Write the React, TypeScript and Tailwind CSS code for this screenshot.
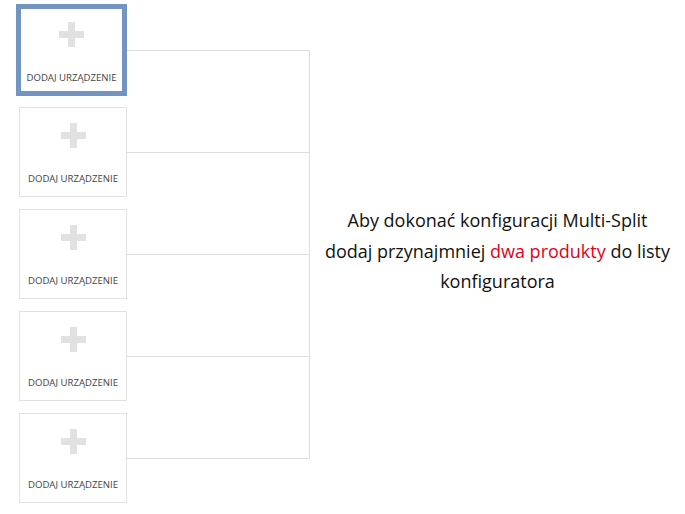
const font = { fontFamily: '"Open Sans", "Liberation Sans", sans-serif' };

function Plus() {
  return (
    <svg width="25" height="25" viewBox="0 0 25 25" className="block">
      <rect x="9" y="0" width="7" height="25" fill="#e1e1e1" />
      <rect x="0" y="9" width="25" height="7" fill="#e1e1e1" />
    </svg>
  );
}

function DeviceCard({ active }: { active?: boolean }) {
  return (
    <button
      type="button"
      className={
        active
          ? "flex h-[92px] w-[111px] flex-col items-center border-[5px] border-[#7194c1] bg-white pt-[13px]"
          : "ml-[3px] flex h-[90px] w-[108px] flex-col items-center border border-[#e2e2e2] bg-white pt-[15px]"
      }
    >
      <Plus />
      <span className="mt-[25px] text-[9.6px] leading-[12px] text-[#444]">DODAJ URZĄDZENIE</span>
    </button>
  );
}

export default function App() {
  return (
    <div className="flex h-[514px] w-[685px] bg-white" style={font}>
      <div className="flex w-[127px] shrink-0 flex-col pl-[16px] pt-[4px]">
        <DeviceCard active />
        <div className="mt-[11px] flex flex-col gap-[12px]">
          <DeviceCard />
          <DeviceCard />
          <DeviceCard />
          <DeviceCard />
        </div>
      </div>

      <div className="mt-[50px] flex h-[409px] w-[183px] shrink-0 flex-col border-r border-[#dedede]">
        <div className="h-[102px] border-t border-[#dedede]" />
        <div className="h-[102px] border-t border-[#dedede]" />
        <div className="h-[102px] border-t border-[#dedede]" />
        <div className="h-[103px] border-y border-[#dedede]" />
      </div>

      <div className="flex flex-1 justify-center pt-[205px]">
        <p className="text-center text-[18px] leading-[30.5px] text-[#111]">
          Aby dokonać konfiguracji Multi-Split
          <br />
          dodaj przynajmniej <span className="text-[#e3001b]">dwa produkty</span> do listy
          <br />
          konfiguratora
        </p>
      </div>
    </div>
  );
}
